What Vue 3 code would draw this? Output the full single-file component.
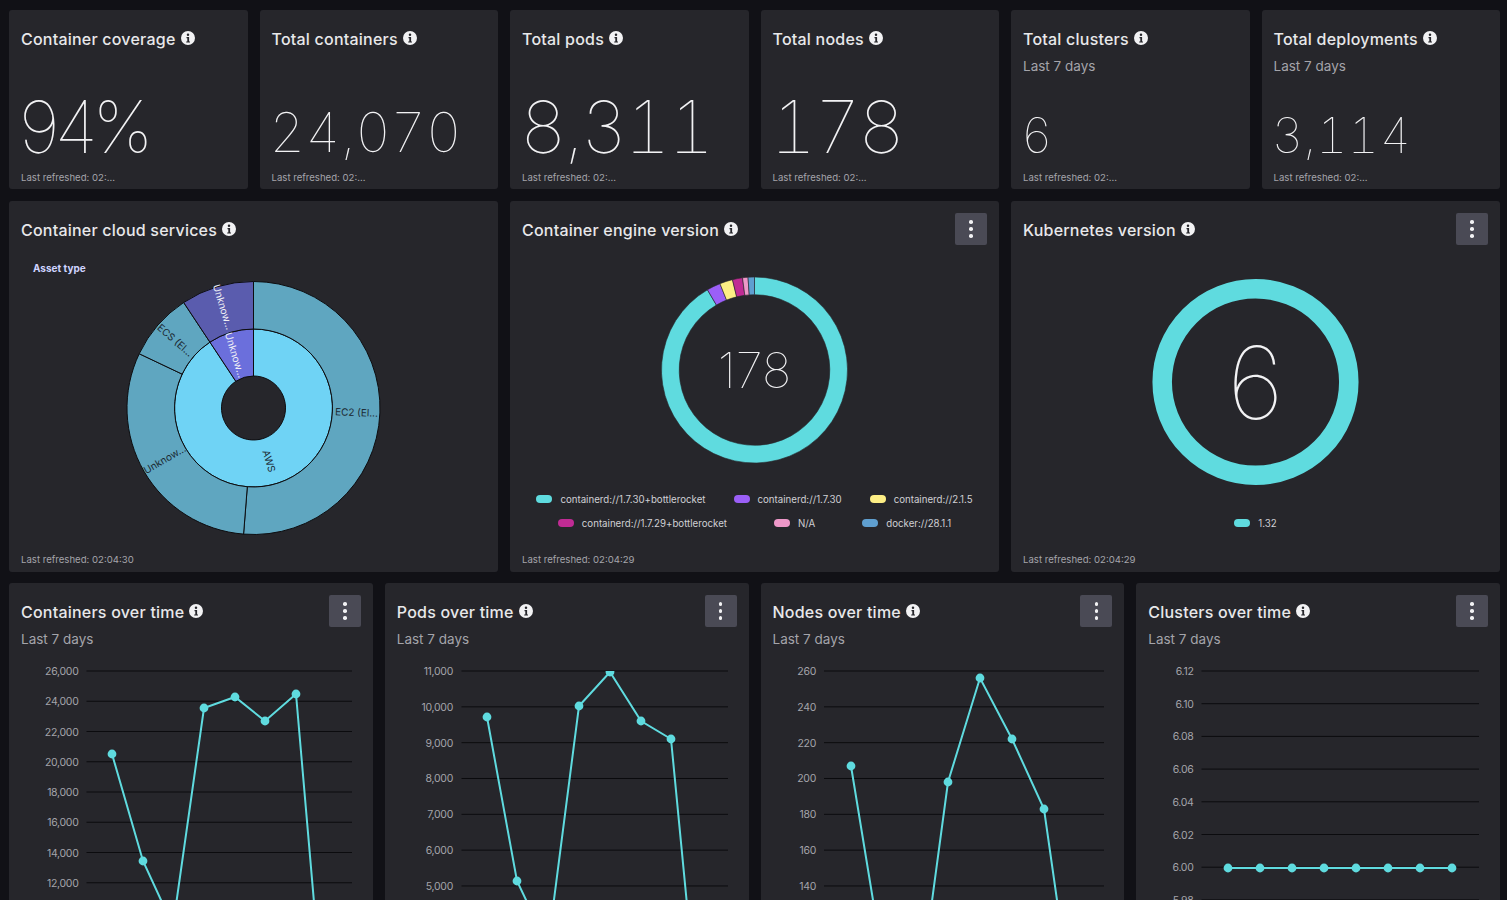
<template>
  <div class="page">
    <div class="row row-stats">
      <div v-for="s in stats" :key="s.title" class="card stat-card">
        <div class="card-head">
          <h3 class="title">{{ s.title }}<svg class="info" viewBox="0 0 16 16"><path fill-rule="evenodd" d="M8 1a7 7 0 1 0 0 14A7 7 0 0 0 8 1zM8 3.4a1.25 1.25 0 1 1 0 2.5 1.25 1.25 0 0 1 0-2.5zM6.5 7h2.6v4.4h.9v1.2H6.2v-1.2h1.1V8.2h-.8z"/></svg></h3>
        </div>
        <div v-if="s.sub" class="sub">{{ s.sub }}</div>
        <div class="stat-value" :class="s.size">{{ s.value }}</div>
        <div class="refreshed">Last refreshed: 02:...</div>
      </div>
    </div>

    <div class="row row-donuts">
      <div class="card donut-card">
        <div class="card-head">
          <h3 class="title">Container cloud services<svg class="info" viewBox="0 0 16 16"><path fill-rule="evenodd" d="M8 1a7 7 0 1 0 0 14A7 7 0 0 0 8 1zM8 3.4a1.25 1.25 0 1 1 0 2.5 1.25 1.25 0 0 1 0-2.5zM6.5 7h2.6v4.4h.9v1.2H6.2v-1.2h1.1V8.2h-.8z"/></svg></h3>
        </div>
        <div class="chart-body">
          <svg class="chart-svg" viewBox="0 0 489 300" width="489" height="300">
            <text x="24" y="27" class="asset-type">Asset type</text>
            <path v-for="seg in sunSegments" :key="seg.key" :d="seg.d" :fill="seg.fill" stroke="#0d0d10" stroke-width="1" />
            <text
              v-for="l in sunLabels"
              :key="l.key"
              class="sun-label"
              :fill="l.fill"
              text-anchor="middle"
              dominant-baseline="central"
              :transform="`translate(${l.x} ${l.y}) rotate(${l.rot})`"
            >{{ l.text }}</text>
          </svg>
        </div>
        <div class="refreshed">Last refreshed: 02:04:30</div>
      </div>

      <div class="card donut-card">
        <div class="card-head">
          <h3 class="title">Container engine version<svg class="info" viewBox="0 0 16 16"><path fill-rule="evenodd" d="M8 1a7 7 0 1 0 0 14A7 7 0 0 0 8 1zM8 3.4a1.25 1.25 0 1 1 0 2.5 1.25 1.25 0 0 1 0-2.5zM6.5 7h2.6v4.4h.9v1.2H6.2v-1.2h1.1V8.2h-.8z"/></svg></h3>
          <button class="kebab"><span></span><span></span><span></span></button>
        </div>
        <div class="chart-body">
          <svg class="chart-svg" viewBox="0 0 489 229" width="489" height="229">
            <path v-for="seg in engineSegments" :key="seg.key" :d="seg.d" :fill="seg.fill" stroke="#26262b" stroke-width="0.6" />
            <text x="244.5" y="143" text-anchor="middle" class="donut-num engine-num">178</text>
          </svg>
          <div class="legend">
            <div class="legend-row gap-a">
              <span v-for="l in engineLegend[0]" :key="l.label" class="legend-item"><i class="swatch" :class="l.cls"></i>{{ l.label }}</span>
            </div>
            <div class="legend-row gap-b">
              <span v-for="l in engineLegend[1]" :key="l.label" class="legend-item"><i class="swatch" :class="l.cls"></i>{{ l.label }}</span>
            </div>
          </div>
        </div>
        <div class="refreshed">Last refreshed: 02:04:29</div>
      </div>

      <div class="card donut-card">
        <div class="card-head">
          <h3 class="title">Kubernetes version<svg class="info" viewBox="0 0 16 16"><path fill-rule="evenodd" d="M8 1a7 7 0 1 0 0 14A7 7 0 0 0 8 1zM8 3.4a1.25 1.25 0 1 1 0 2.5 1.25 1.25 0 0 1 0-2.5zM6.5 7h2.6v4.4h.9v1.2H6.2v-1.2h1.1V8.2h-.8z"/></svg></h3>
          <button class="kebab"><span></span><span></span><span></span></button>
        </div>
        <div class="chart-body">
          <svg class="chart-svg" viewBox="0 0 489 264" width="489" height="264">
            <circle cx="244.5" cy="137" r="93.3" fill="none" stroke="#5fdbdf" stroke-width="19.5" />
            <text x="244.5" y="174" text-anchor="middle" class="donut-num k8s-num">6</text>
          </svg>
          <div class="legend legend-k8s">
            <div class="legend-row">
              <span class="legend-item"><i class="swatch teal"></i>1.32</span>
            </div>
          </div>
        </div>
        <div class="refreshed">Last refreshed: 02:04:29</div>
      </div>
    </div>

    <div class="row row-lines">
      <div v-for="(c, i) in lineCharts" :key="c.title" class="card line-card">
        <div class="card-head">
          <h3 class="title">{{ c.title }}<svg class="info" viewBox="0 0 16 16"><path fill-rule="evenodd" d="M8 1a7 7 0 1 0 0 14A7 7 0 0 0 8 1zM8 3.4a1.25 1.25 0 1 1 0 2.5 1.25 1.25 0 0 1 0-2.5zM6.5 7h2.6v4.4h.9v1.2H6.2v-1.2h1.1V8.2h-.8z"/></svg></h3>
          <button class="kebab"><span></span><span></span><span></span></button>
        </div>
        <div class="sub">Last 7 days</div>
        <svg class="line-svg" viewBox="0 0 364 260" width="364" height="260">
          <clipPath :id="`plot-${i}`"><rect x="0" y="16" width="364" height="244" /></clipPath>
          <g v-for="g in c.grid" :key="g.label">
            <line :x1="c.x1" :x2="c.x2" :y1="g.y" :y2="g.y" stroke="#0b0b0e" stroke-width="1" />
            <text :x="c.labelX" :y="g.y + 4" text-anchor="end" class="axis">{{ g.label }}</text>
          </g>
          <g :clip-path="`url(#plot-${i})`">
            <polyline :points="c.points.map(p => p.join(',')).join(' ')" fill="none" stroke="#5fdbdf" stroke-width="2" />
            <circle v-for="p in c.points" :key="p[0]" :cx="p[0]" :cy="p[1]" r="4.4" fill="#5fdbdf" />
          </g>
        </svg>
      </div>
    </div>
  </div>
</template>

<script setup>
const stats = [
  { title: 'Container coverage', value: '94%', size: 'xl pct' },
  { title: 'Total containers', value: '24,070', size: 'lg' },
  { title: 'Total pods', value: '8,311', size: 'xl' },
  { title: 'Total nodes', value: '178', size: 'xl' },
  { title: 'Total clusters', sub: 'Last 7 days', value: '6', size: 'md' },
  { title: 'Total deployments', sub: 'Last 7 days', value: '3,114', size: 'md' }
]

const polar = (cx, cy, r, deg) => {
  const a = (deg - 90) * Math.PI / 180
  return [cx + r * Math.cos(a), cy + r * Math.sin(a)]
}

const arc = (cx, cy, r0, r1, from, to) => {
  const large = to - from > 180 ? 1 : 0
  const [ax, ay] = polar(cx, cy, r1, from)
  const [bx, by] = polar(cx, cy, r1, to)
  const [c1, c2] = polar(cx, cy, r0, to)
  const [d1, d2] = polar(cx, cy, r0, from)
  return `M${ax} ${ay}A${r1} ${r1} 0 ${large} 1 ${bx} ${by}L${c1} ${c2}A${r0} ${r0} 0 ${large} 0 ${d1} ${d2}Z`
}

// sunburst centre in card coords
const sx = 244.5
const sy = 163

const sunSegments = [
  { key: 'aws', from: 0, to: 326.5, r0: 32, r1: 79, fill: '#6fd3f5' },
  { key: 'unk', from: 326.5, to: 360, r0: 32, r1: 79, fill: '#6b6fdc' },
  { key: 'ec2', from: 0, to: 184.5, r0: 79, r1: 126.5, fill: '#5fa6c0' },
  { key: 'unk2', from: 184.5, to: 295.4, r0: 79, r1: 126.5, fill: '#5fa6c0' },
  { key: 'ecs', from: 295.4, to: 326.5, r0: 79, r1: 126.5, fill: '#5fa6c0' },
  { key: 'unk3', from: 326.5, to: 360, r0: 79, r1: 126.5, fill: '#5a5cae' }
].map(s => ({ ...s, d: arc(sx, sy, s.r0, s.r1, s.from, s.to) }))

const sunLabels = [
  { key: 'ec2', text: 'EC2 (El...', x: sx + 103, y: sy + 4, rot: 2, fill: '#1c2a33' },
  { key: 'aws', text: 'AWS', x: sx + 16, y: sy + 53, rot: 73, fill: '#1c2a33' },
  { key: 'unk2', text: 'Unknow...', x: sx - 89, y: sy + 51, rot: -30, fill: '#1c2a33' },
  { key: 'ecs', text: 'ECS (El...', x: sx - 78, y: sy - 68, rot: 41, fill: '#1c2a33' },
  { key: 'unk3', text: 'Unknow...', x: sx - 30, y: sy - 101, rot: 73, fill: '#f0f0f5' },
  { key: 'unk', text: 'Unknow...', x: sx - 18, y: sy - 53, rot: 73, fill: '#f0f0f5' }
]

const engineSegments = [
  { key: 'a', from: 0, to: 329.6, fill: '#5fdbdf' },
  { key: 'b', from: 329.6, to: 338.2, fill: '#9b5ff7' },
  { key: 'c', from: 338.2, to: 346.3, fill: '#fdee85' },
  { key: 'd', from: 346.3, to: 352.6, fill: '#c02b94' },
  { key: 'e', from: 352.6, to: 356, fill: '#ee98c9' },
  { key: 'f', from: 356, to: 360, fill: '#5f9fd0' }
].map(s => ({ ...s, d: arc(244.5, 125, 75.3, 93, s.from, s.to) }))

const engineLegend = [
  [
    { label: 'containerd://1.7.30+bottlerocket', cls: 'teal' },
    { label: 'containerd://1.7.30', cls: 'violet' },
    { label: 'containerd://2.1.5', cls: 'yellow' }
  ],
  [
    { label: 'containerd://1.7.29+bottlerocket', cls: 'magenta' },
    { label: 'N/A', cls: 'pink' },
    { label: 'docker://28.1.1', cls: 'blue' }
  ]
]

// y in svg coords: svg starts at page y 655
const top = 655
const pts = list => list.map(([x, y]) => [x, y - top])

const gridOf = (labels, startY, step) =>
  labels.map((label, i) => ({ label, y: startY - top + step * i }))

const lineCharts = [
  {
    title: 'Containers over time',
    x1: 77.5, x2: 343, labelX: 69.5,
    grid: gridOf(['26,000', '24,000', '22,000', '20,000', '18,000', '16,000', '14,000', '12,000', '10,000'], 671, 30.25),
    points: pts([[103, 754], [134, 861], [164, 926], [195, 708], [226, 697], [256, 721], [287, 694], [317, 1041]])
  },
  {
    title: 'Pods over time',
    x1: 76.5, x2: 343, labelX: 68,
    grid: gridOf(['11,000', '10,000', '9,000', '8,000', '7,000', '6,000', '5,000', '4,000'], 671, 35.83),
    points: pts([[102, 717], [132, 881], [163, 946], [194, 706], [225, 672], [256, 721], [286, 739], [317, 1060]])
  },
  {
    title: 'Nodes over time',
    x1: 63, x2: 343, labelX: 55,
    grid: gridOf(['260', '240', '220', '200', '180', '160', '140', '120'], 671, 35.83),
    points: pts([[90, 766], [122, 961], [155, 1020], [187, 782], [219, 678], [251, 739], [283, 809], [315, 1033]])
  },
  {
    title: 'Clusters over time',
    x1: 65.5, x2: 343, labelX: 57.5,
    grid: gridOf(['6.12', '6.10', '6.08', '6.06', '6.04', '6.02', '6.00', '5.98'], 671, 32.7),
    points: pts([[92, 868], [124, 868], [156, 868], [188, 868], [220, 868], [252, 868], [284, 868], [316, 868]])
  }
]
</script>

<style scoped>
.page {
  height: 100vh;
  overflow: hidden;
  box-sizing: border-box;
  padding: 10px 7px 0 9px;
  background: #111116;
  display: flex;
  flex-direction: column;
  gap: 12px;
  font-family: Inter, "Noto Sans", sans-serif;
  color: #e8e8ea;
}

.row {
  display: grid;
  gap: 12px;
  flex-shrink: 0;
}

.row-stats {
  grid-template-columns: repeat(6, 1fr);
  height: 179px;
}

.row-donuts {
  grid-template-columns: repeat(3, 1fr);
  height: 370px;
}

.row-lines {
  grid-template-columns: repeat(4, 1fr);
  height: 360px;
}

.card {
  background: #26262b;
  border-radius: 3px;
  padding: 12px;
  display: flex;
  flex-direction: column;
  box-sizing: border-box;
  min-width: 0;
}

.card-head {
  display: flex;
  justify-content: space-between;
  align-items: flex-start;
  height: 32px;
  flex-shrink: 0;
}

.title {
  margin: 0;
  padding-top: 1px;
  font-size: 16px;
  font-weight: 500;
  letter-spacing: 0.22px;
  line-height: 32px;
  color: #e8e8ea;
  white-space: nowrap;
  display: flex;
  align-items: center;
}

.info {
  width: 16px;
  height: 16px;
  margin-left: 4px;
  margin-top: -2px;
  fill: #f2f2f4;
}

.sub {
  font-size: 13.5px;
  color: #a4a4aa;
  line-height: 20px;
  margin-top: 2px;
}

.stat-card {
  padding-bottom: 4px;
}

.stat-value {
  margin-top: auto;
  margin-left: -2px;
  font-weight: 100;
  font-feature-settings: "tnum";
  color: #f2f2f4;
  line-height: 1;
  white-space: nowrap;
}

.stat-value.xl {
  font-size: 72px;
  letter-spacing: -2.5px;
}

.stat-value.pct {
  font-feature-settings: normal;
  letter-spacing: -5px;
}

.stat-value.lg {
  font-size: 55px;
  margin-bottom: 3px;
}

.stat-value.md {
  font-size: 49px;
  margin-bottom: 3px;
}

.refreshed {
  font-size: 9.6px;
  color: #a4a4aa;
  line-height: 14px;
  margin-top: 8px;
  white-space: nowrap;
}

.donut-card {
  padding-bottom: 5px;
}

.chart-body {
  flex: 1;
  min-height: 0;
  margin: 0 -12px;
}

.chart-svg {
  display: block;
}

.asset-type {
  font-size: 10px;
  font-weight: 700;
  fill: #cfd4ff;
}

.sun-label {
  font-size: 10px;
}

.donut-num {
  font-weight: 100;
  fill: #f2f2f4;
}

.engine-num {
  font-size: 49px;
}

.k8s-num {
  font-size: 100px;
}

.legend {
  display: flex;
  flex-direction: column;
  gap: 10px;
  margin-top: 18px;
}

.legend-k8s {
  margin-top: 7px;
}

.legend-row {
  display: flex;
  justify-content: center;
  height: 14px;
  align-items: center;
}

.gap-a {
  gap: 28px;
}

.gap-b {
  gap: 47px;
}

.legend-item {
  display: inline-flex;
  align-items: center;
  gap: 8px;
  font-size: 9.7px;
  color: #d0d0d4;
  white-space: nowrap;
}

.swatch {
  display: inline-block;
  width: 16px;
  height: 8px;
  border-radius: 4px;
}

.swatch.teal { background: #5fdbdf; }
.swatch.violet { background: #9b5ff7; }
.swatch.yellow { background: #fdee85; }
.swatch.magenta { background: #c02b94; }
.swatch.pink { background: #ee98c9; }
.swatch.blue { background: #5f9fd0; }

.kebab {
  width: 32px;
  height: 32px;
  flex-shrink: 0;
  border: 0;
  padding: 0;
  border-radius: 2px;
  background: #4a4a55;
  display: flex;
  flex-direction: column;
  align-items: center;
  justify-content: center;
  gap: 3.5px;
}

.kebab span {
  width: 3.5px;
  height: 3.5px;
  border-radius: 50%;
  background: #f2f2f4;
}

.line-svg {
  display: block;
  margin: 6px -12px 0;
  flex-shrink: 0;
}

.line-card {
  overflow: hidden;
}

.axis {
  font-size: 10.5px;
  letter-spacing: -0.3px;
  fill: #a4a4aa;
}
</style>

<style>
html, body {
  margin: 0;
  overflow: hidden;
  background: #111116;
}
</style>
